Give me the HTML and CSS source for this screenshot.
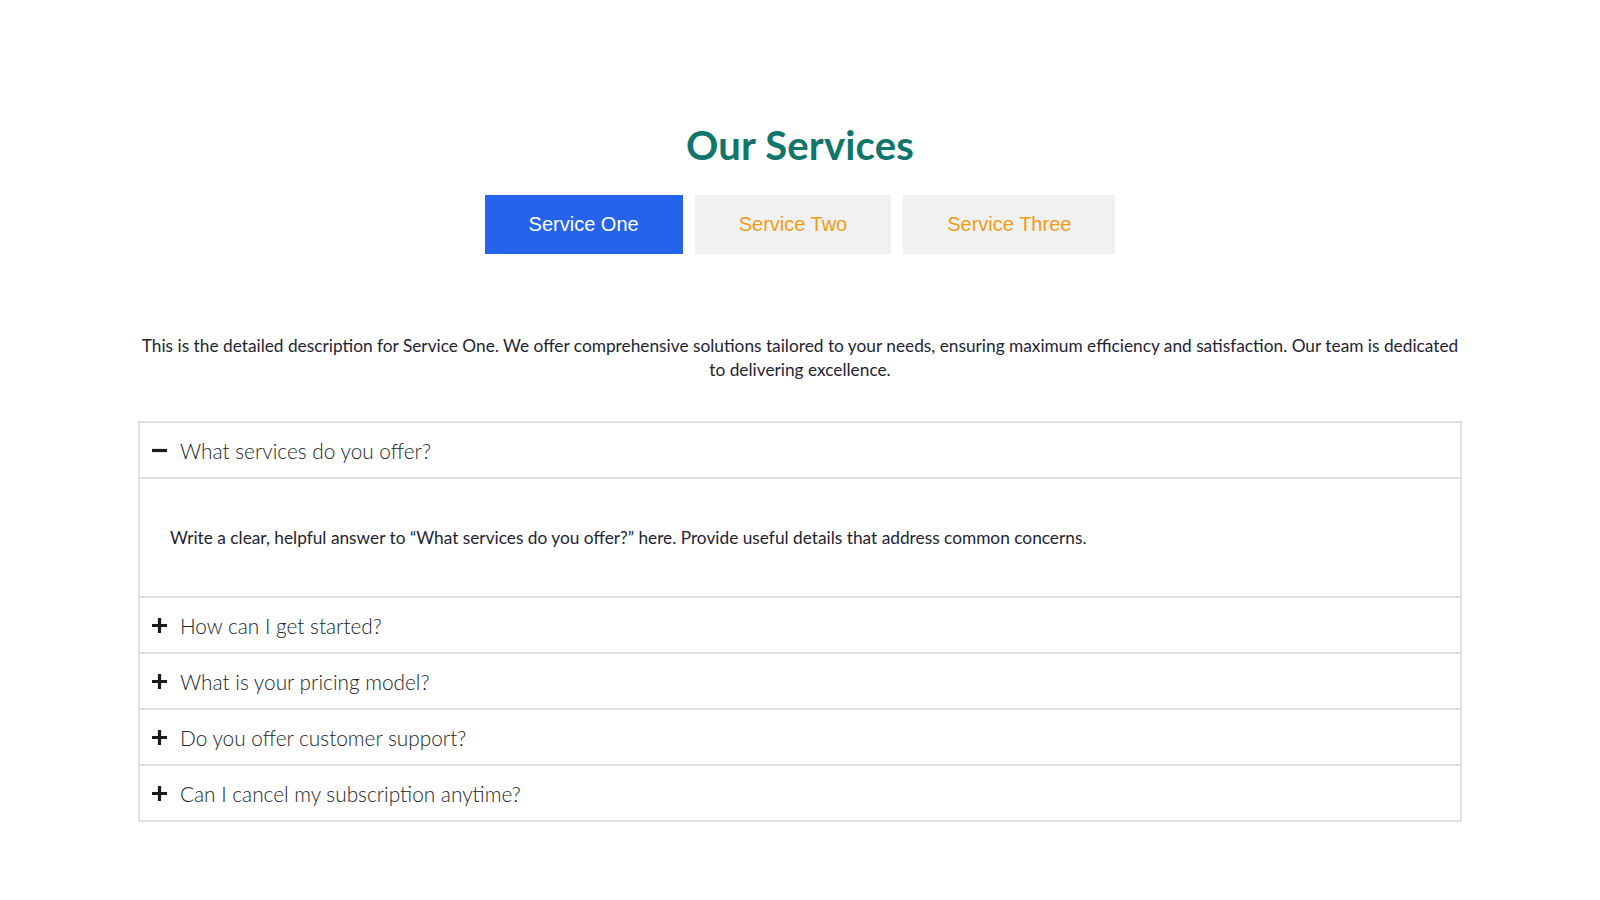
FILE: index.html
```html
<!DOCTYPE html>
<html lang="en">
<head>
<meta charset="utf-8">
<title>Our Services</title>
<link rel="stylesheet" href="styles.css">
</head>
<body>
<section class="services">
  <h2 class="services-title">Our Services</h2>
  <div class="tabs">
    <button class="tab tab-active">Service One</button>
    <button class="tab">Service Two</button>
    <button class="tab">Service Three</button>
  </div>
  <p class="description">This is the detailed description for Service One. We offer comprehensive solutions tailored to your needs, ensuring maximum efficiency and satisfaction. Our team is dedicated to delivering excellence.</p>
  <div class="accordion">
    <div class="item open">
      <div class="question">
        <svg class="icon" viewBox="0 0 17 17"><path d="M1 8.5H16" /></svg>
        <span>What services do you offer?</span>
      </div>
      <div class="answer">Write a clear, helpful answer to “What services do you offer?” here. Provide useful details that address common concerns.</div>
    </div>
    <div class="item">
      <div class="question">
        <svg class="icon" viewBox="0 0 17 17"><path d="M1 8.5H16M8.5 1V16" /></svg>
        <span>How can I get started?</span>
      </div>
    </div>
    <div class="item">
      <div class="question">
        <svg class="icon" viewBox="0 0 17 17"><path d="M1 8.5H16M8.5 1V16" /></svg>
        <span>What is your pricing model?</span>
      </div>
    </div>
    <div class="item">
      <div class="question">
        <svg class="icon" viewBox="0 0 17 17"><path d="M1 8.5H16M8.5 1V16" /></svg>
        <span>Do you offer customer support?</span>
      </div>
    </div>
    <div class="item">
      <div class="question">
        <svg class="icon" viewBox="0 0 17 17"><path d="M1 8.5H16M8.5 1V16" /></svg>
        <span>Can I cancel my subscription anytime?</span>
      </div>
    </div>
  </div>
</section>
</body>
</html>
```

FILE: styles.css
```css
* { box-sizing: border-box; }

body {
  margin: 0;
  background: #ffffff;
  font-family: Lato, "Open Sans", sans-serif;
}

.services {
  width: 1324px;
  margin: 0 auto;
  padding-top: 120px;
}

.services-title {
  margin: 0;
  text-align: center;
  font-size: 40px;
  line-height: 50px;
  font-weight: 700;
  color: #10756b;
  letter-spacing: 0.2px;
}

.tabs {
  display: flex;
  justify-content: center;
  gap: 12px;
  margin-top: 25px;
}

.tab {
  height: 59px;
  padding: 0 44px;
  border: 0;
  border-radius: 0;
  background: #f0f1f3;
  color: #f39c12;
  font-family: "Liberation Sans", Arial, sans-serif;
  font-size: 20px;
  cursor: pointer;
}

.tab-active {
  background: #2563eb;
  color: #ffffff;
}

.description {
  margin: 80px 0 0;
  text-align: center;
  font-size: 17.3px;
  line-height: 23.5px;
  color: #1f2433;
  padding: 0 2px;
}

.accordion {
  margin-top: 40px;
  border: 2px solid #e1e2e5;
  border-bottom: 0;
}

.item {
  border-bottom: 2px solid #dcdde1;
}

.question {
  display: flex;
  align-items: center;
  gap: 12px;
  height: 54px;
  padding: 0 11px;
  font-size: 20.8px;
  font-weight: 300;
  color: #23262c;
}

.icon {
  width: 17px;
  height: 17px;
  flex: none;
  fill: none;
  stroke: #1c1c1c;
  stroke-width: 3.2;
}

.answer {
  height: 119px;
  display: flex;
  align-items: center;
  padding: 0 30px;
  border-top: 2px solid #dcdde1;
  font-size: 17.3px;
  color: #1f2433;
}
```
